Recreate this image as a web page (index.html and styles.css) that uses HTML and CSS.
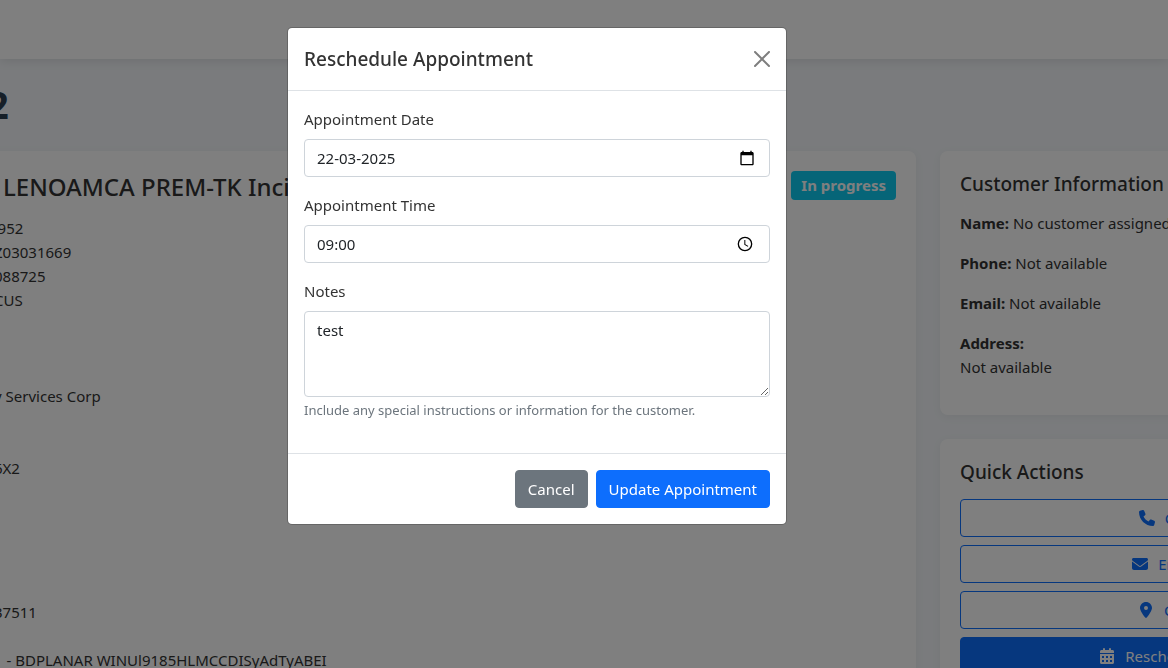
FILE: index.html
```html
<!DOCTYPE html>
<html lang="en">
<head>
<meta charset="utf-8">
<meta name="viewport" content="width=device-width, initial-scale=1">
<title>Reschedule Appointment</title>
<link rel="stylesheet" href="styles.css">
</head>
<body>
<header class="navbar"></header>
<main class="page">
  <h1 class="page-title">2</h1>
  <div class="columns">
    <section class="card ticket">
      <div class="ticket-head">
        <h2 class="ticket-title">- LENOAMCA PREM-TK Incident</h2>
        <span class="badge">In progress</span>
      </div>
      <p>1952</p>
      <div class="ticket-group">
        <p>Z03031669</p>
        <p>088725</p>
        <p>CUS</p>
      </div>
      <div class="ticket-group gap-lg"><p>y Services Corp</p></div>
      <div class="ticket-group gap-md"><p>6X2</p></div>
      <div class="ticket-group gap-xl"><p>37511</p></div>
      <div class="ticket-group gap-sm"><p>1 - BDPLANAR WINUl9185HLMCCDISyAdTyABEI</p></div>
    </section>
    <aside class="side">
      <section class="card">
        <h2 class="card-title">Customer Information</h2>
        <p class="info"><strong>Name:</strong> No customer assigned</p>
        <p class="info"><strong>Phone:</strong> Not available</p>
        <p class="info"><strong>Email:</strong> Not available</p>
        <p class="info"><strong>Address:</strong><br>Not available</p>
      </section>
      <section class="card">
        <h2 class="card-title">Quick Actions</h2>
        <div class="actions">
          <button type="button" class="btn btn-outline"><svg class="icon" viewBox="0 0 512 512"><path d="M164.900 24.600c-7.700-18.600-28-28.500-47.400-23.200l-88 24C12.100 30.200 0 46 0 64c0 247.400 200.600 448 448 448 18 0 33.800-12.100 38.600-29.500l24-88c5.300-19.400-4.600-39.700-23.200-47.400l-96-40c-16.300-6.800-35.200-2.100-46.300 11.600L304.700 368C234.300 334.700 177.300 277.700 144 207.300L193.300 167c13.700-11.200 18.400-30 11.600-46.300z"/></svg>Call Customer</button>
          <button type="button" class="btn btn-outline"><svg class="icon" viewBox="0 0 512 512"><path d="M48 64C21.500 64 0 85.500 0 112c0 15.100 7.100 29.300 19.200 38.400l217.600 163.200c11.400 8.500 27 8.500 38.400 0l217.600-163.200C504.900 141.300 512 127.100 512 112c0-26.500-21.500-48-48-48zM0 176v208c0 35.300 28.700 64 64 64h384c35.300 0 64-28.700 64-64V176L294.400 339.200c-22.800 17.100-54 17.100-76.800 0z"/></svg>Email Customer</button>
          <button type="button" class="btn btn-outline"><svg class="icon" viewBox="0 0 384 512"><path d="M215.700 499.200C267 435 384 279.400 384 192 384 86 298 0 192 0S0 86 0 192c0 87.400 117 243 168.300 307.200 12.300 15.300 35.100 15.300 47.400 0zM192 128a64 64 0 1 1 0 128 64 64 0 1 1 0-128z"/></svg>Get Directions</button>
          <button type="button" class="btn btn-primary"><svg class="icon" viewBox="0 0 448 512"><path fill-rule="evenodd" d="M96 32a32 32 0 0 1 64 0v32h128V32a32 32 0 0 1 64 0v32h48c26.500 0 48 21.500 48 48v48H0v-48c0-26.500 21.500-48 48-48h48zM0 192h448v272c0 26.500-21.500 48-48 48H48c-26.500 0-48-21.500-48-48zM64 256v64h64v-64zM192 256v64h64v-64zM320 256v64h64v-64zM64 384v64h64v-64zM192 384v64h64v-64zM320 384v64h64v-64z"/></svg>Reschedule Appointment</button>
        </div>
      </section>
    </aside>
  </div>
</main>

<div class="backdrop">
  <div class="modal" role="dialog" aria-modal="true" aria-labelledby="modal-title">
    <div class="modal-header">
      <h2 class="modal-title" id="modal-title">Reschedule Appointment</h2>
      <button type="button" class="close" aria-label="Close"><svg viewBox="0 0 16 16"><path d="M.293.293a1 1 0 0 1 1.414 0L8 6.586 14.293.293a1 1 0 1 1 1.414 1.414L9.414 8l6.293 6.293a1 1 0 0 1-1.414 1.414L8 9.414l-6.293 6.293a1 1 0 0 1-1.414-1.414L6.586 8 .293 1.707a1 1 0 0 1 0-1.414z"/></svg></button>
    </div>
    <form class="modal-body">
      <div class="field">
        <label for="date">Appointment Date</label>
        <div class="control picker">
          <input id="date" type="text" inputmode="numeric" value="22-03-2025">
          <button type="button" class="picker-btn" aria-label="Choose date"><svg viewBox="0 0 24 24"><path d="M20 3h-1V1h-2v2H7V1H5v2H4c-1.100 0-2 .9-2 2v16c0 1.100.9 2 2 2h16c1.100 0 2-.9 2-2V5c0-1.100-.9-2-2-2zm0 18H4V8h16v13z"/></svg></button>
        </div>
      </div>
      <div class="field">
        <label for="time">Appointment Time</label>
        <div class="control picker">
          <input id="time" type="text" inputmode="numeric" value="09:00">
          <button type="button" class="picker-btn picker-time" aria-label="Choose time"><svg viewBox="0 0 24 24"><path d="M12 1a11 11 0 1 0 0 22 11 11 0 0 0 0-22zm0 20a9 9 0 1 1 0-18 9 9 0 0 1 0 18zM12.500 6H11v7l5.200 3.200.8-1.300-4.500-2.700z"/></svg></button>
        </div>
      </div>
      <div class="field">
        <label for="notes">Notes</label>
        <textarea class="control" id="notes" rows="3" spellcheck="false" aria-describedby="notes-help">test</textarea>
        <div class="help" id="notes-help">Include any special instructions or information for the customer.</div>
      </div>
    </form>
    <div class="modal-footer">
      <button type="button" class="btn btn-secondary">Cancel</button>
      <button type="button" class="btn btn-primary">Update Appointment</button>
    </div>
  </div>
</div>
</body>
</html>
```
FILE: styles.css
```css
* { box-sizing: border-box; }

body {
  margin: 0;
  min-height: 100vh;
  overflow: hidden;
  background: #f4f7fa;
  color: #333;
  font: 15px/24px "Segoe UI", "Noto Sans", sans-serif;
}

h1, h2, p { margin: 0; }
button, input, textarea { font: inherit; }

.navbar {
  height: 59px;
  background: #fff;
  box-shadow: 0 2px 10px rgba(0, 0, 0, .1);
}

/* The ticket page runs past both sides of the window. */
.page {
  height: calc(100vh - 59px);
  margin: 0 -292px 0 -31px;
  padding-top: 20px;
}

.page-title {
  margin-bottom: 22px;
  padding-left: 18px;
  color: #2c3e50;
  font-size: 38px;
  line-height: 50px;
  font-weight: 700;
}

.columns {
  display: grid;
  grid-template-columns: minmax(0, 1fr) 520px;
  gap: 24px;
}

.side {
  display: flex;
  flex-direction: column;
  gap: 24px;
}

.card {
  padding: 20px;
  background: #fff;
  border-radius: 8px;
  box-shadow: 0 2px 10px rgba(0, 0, 0, .05);
}

.ticket-head {
  display: flex;
  align-items: flex-start;
  justify-content: space-between;
  margin-bottom: 14px;
}

.ticket-title {
  font-size: 24px;
  line-height: 31px;
  font-weight: 500;
}

.badge {
  padding: 0 10px;
  border-radius: 4px;
  background: #0dcaf0;
  color: #fff;
  line-height: 29px;
  font-weight: 700;
}

.ticket-group { padding-left: 5px; }

.gap-sm { margin-top: 24px; }
.gap-md { margin-top: 48px; }
.gap-lg { margin-top: 72px; }
.gap-xl { margin-top: 120px; }

.card-title {
  margin-bottom: 14px;
  font-size: 19px;
  line-height: 26px;
  font-weight: 500;
}

.info { margin-bottom: 16px; }

.actions {
  display: flex;
  flex-direction: column;
  gap: 8px;
}

.btn {
  display: flex;
  align-items: center;
  justify-content: center;
  gap: 8px;
  padding: 6px 12px;
  border: 1px solid transparent;
  border-radius: 4px;
  background: none;
}

.btn-outline { border-color: #0d6efd; color: #0d6efd; }
.btn-primary { border-color: #0d6efd; background: #0d6efd; color: #fff; }
.btn-secondary { border-color: #6c757d; background: #6c757d; color: #fff; }

.icon {
  width: 20px;
  height: 16px;
  fill: currentColor;
}

.backdrop {
  position: fixed;
  inset: 0;
  display: flex;
  align-items: flex-start;
  justify-content: center;
  padding: 27px 94px 27px 0;
  background: rgba(0, 0, 0, .5);
}

.modal {
  width: 100%;
  max-width: 500px;
  background: #fff;
  background-clip: padding-box;
  border: 1px solid rgba(0, 0, 0, .2);
  border-radius: 5px;
}

.modal-header {
  display: flex;
  align-items: center;
  justify-content: space-between;
  padding: 16px;
  border-bottom: 1px solid #dee2e6;
}

.modal-title {
  font-size: 19px;
  line-height: 30px;
  font-weight: 500;
}

.close {
  display: flex;
  padding: 0;
  border: 0;
  background: none;
  opacity: .5;
}

.close svg { width: 16px; height: 16px; }

.modal-body { padding: 16px; }
.field { margin-bottom: 16px; }

.field label {
  display: block;
  margin-bottom: 8px;
}

.control {
  display: block;
  width: 100%;
  border: 1px solid #ced4da;
  border-radius: 4px;
  background: #fff;
  color: #212529;
}

.picker {
  display: flex;
  align-items: center;
  padding: 6px 12px;
}

.picker input {
  flex: 1;
  min-width: 0;
  height: 24px;
  padding: 0;
  border: 0;
  outline: 0;
  background: none;
  color: inherit;
}

.picker-btn {
  display: flex;
  padding: 0 2px;
  border: 0;
  background: none;
}

.picker-time { padding-right: 4px; }

.picker-btn svg { width: 16px; height: 16px; }

textarea.control {
  height: 86px;
  padding: 6px 12px;
  resize: vertical;
}

.help {
  margin-top: 4px;
  padding-bottom: 2px;
  color: #6c757d;
  font-size: 13px;
  line-height: 18px;
}

.modal-footer {
  display: flex;
  justify-content: flex-end;
  gap: 8px;
  padding: 16px;
  border-top: 1px solid #dee2e6;
}
```
